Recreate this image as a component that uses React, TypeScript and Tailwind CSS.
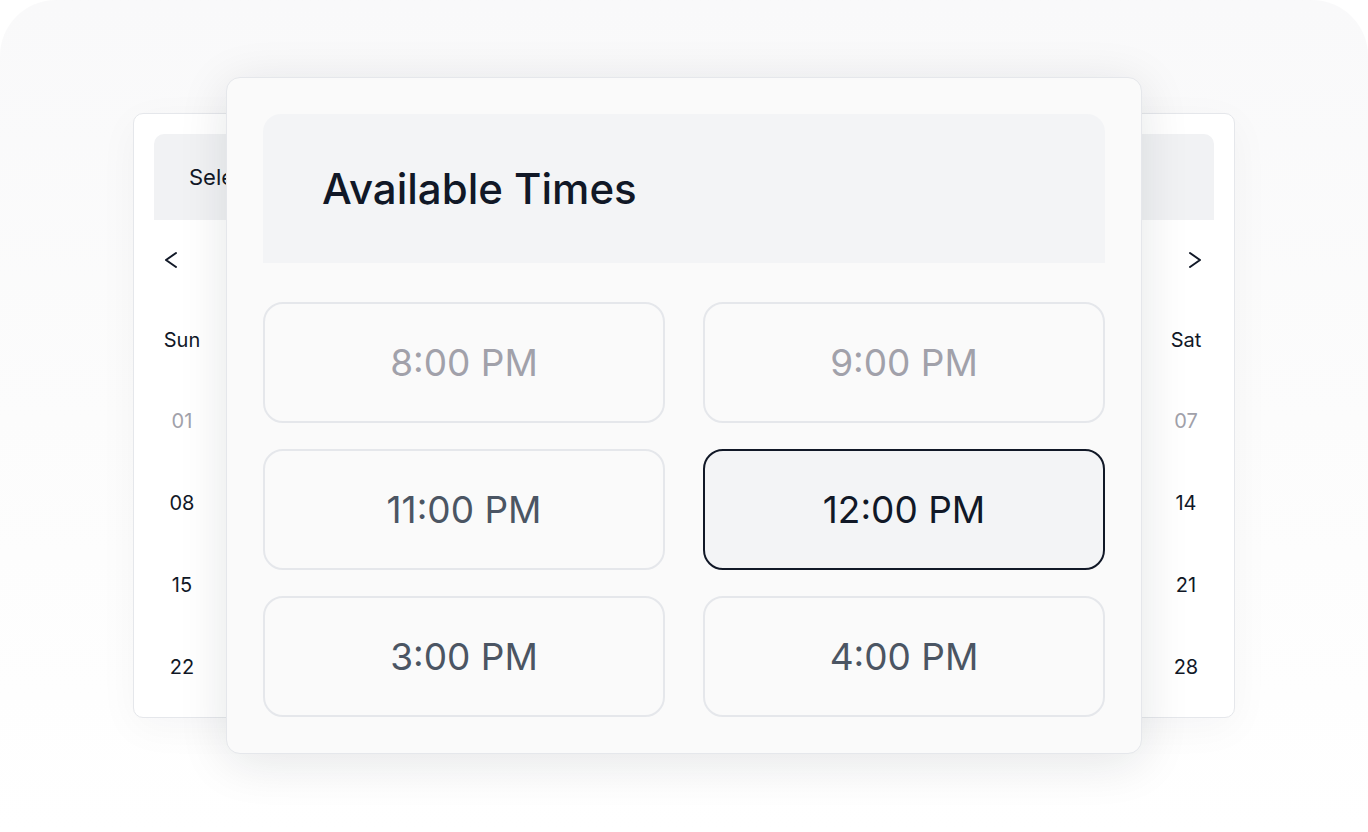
const days = ['Sun', 'Mon', 'Tue', 'Wed', 'Thu', 'Fri', 'Sat'];

const weeks = [
  ['01', '02', '03', '04', '05', '06', '07'],
  ['08', '09', '10', '11', '12', '13', '14'],
  ['15', '16', '17', '18', '19', '20', '21'],
  ['22', '23', '24', '25', '26', '27', '28'],
];

type Slot = { label: string; state: 'disabled' | 'open' | 'selected' };

const slots: Slot[] = [
  { label: '8:00 PM', state: 'disabled' },
  { label: '9:00 PM', state: 'disabled' },
  { label: '11:00 PM', state: 'open' },
  { label: '12:00 PM', state: 'selected' },
  { label: '3:00 PM', state: 'open' },
  { label: '4:00 PM', state: 'open' },
];

function Chevron({ dir }: { dir: 'left' | 'right' }) {
  return (
    <svg width="16" height="20" viewBox="0 0 16 20" fill="none" stroke="#111827" strokeWidth={2} strokeLinecap="round" strokeLinejoin="round">
      {dir === 'left' ? <polyline points="13,3 3,10 13,17" /> : <polyline points="3,3 13,10 3,17" />}
    </svg>
  );
}

function CalendarCard() {
  return (
    <div className="w-[1102px] h-[605px] bg-white border border-[#e5e7eb] rounded-[10px] p-[20px] shadow-[0_10px_40px_rgba(17,24,39,0.04)]">
      {/* Cabecera del calendario */}
      <div className="h-[86px] bg-[#f1f2f4] rounded-t-[10px] flex items-center pl-[35px]">
        <span className="text-[22px] text-[#111827]">Select a Date</span>
      </div>

      {/* Navegación de mes */}
      <div className="flex justify-between items-center h-[80px] pl-[9px] pr-[11px]">
        <Chevron dir="left" />
        <Chevron dir="right" />
      </div>

      {/* Días de la semana */}
      <div className="flex justify-between h-[80px] items-center">
        {days.map((d) => (
          <div key={d} className="w-[56px] text-center text-[20px] text-[#111827]">
            {d}
          </div>
        ))}
      </div>

      {/* Fechas */}
      {weeks.map((week, i) => (
        <div key={i} className="flex justify-between h-[82px] items-center">
          {week.map((date, j) => (
            <div
              key={date}
              className={
                i === 0 && (j === 0 || j === 6)
                  ? 'w-[56px] text-center text-[20px] text-[#a1a1aa]'
                  : 'w-[56px] text-center text-[20px] text-[#111827]'
              }
            >
              {date}
            </div>
          ))}
        </div>
      ))}
    </div>
  );
}

function TimesCard() {
  return (
    <div className="w-[916px] bg-[#fafafa] border border-[#e5e7eb] rounded-[14px] p-[36px] shadow-[0_8px_50px_rgba(17,24,39,0.11)]">
      <div className="h-[149px] bg-[#f3f4f6] rounded-t-[18px] flex items-center pl-[59px]">
        <h2 className="text-[42px] font-medium text-[#111827]">Available Times</h2>
      </div>

      <div className="grid grid-cols-2 gap-x-[38px] gap-y-[26px] mt-[39px]">
        {slots.map((s) => (
          <div
            key={s.label}
            className={
              s.state === 'selected'
                ? 'h-[121px] rounded-[20px] border-2 border-[#111827] bg-[#f3f4f6] flex items-center justify-center text-[37px] text-[#111827]'
                : s.state === 'disabled'
                ? 'h-[121px] rounded-[20px] border-2 border-[#e5e7eb] flex items-center justify-center text-[37px] text-[#a1a1aa]'
                : 'h-[121px] rounded-[20px] border-2 border-[#e5e7eb] flex items-center justify-center text-[37px] text-[#4b5563]'
            }
          >
            {s.label}
          </div>
        ))}
      </div>
    </div>
  );
}

export default function App() {
  return (
    <div className="w-[1368px] h-[832px] bg-white overflow-hidden font-['Inter',sans-serif]">
      <div className="relative w-full h-full rounded-t-[56px] bg-gradient-to-b from-[#f9f9fa] via-[#fcfcfc] to-white pt-[113px] pl-[133px]">
        <CalendarCard />
        <div className="absolute left-[226px] top-[77px]">
          <TimesCard />
        </div>
      </div>
    </div>
  );
}
